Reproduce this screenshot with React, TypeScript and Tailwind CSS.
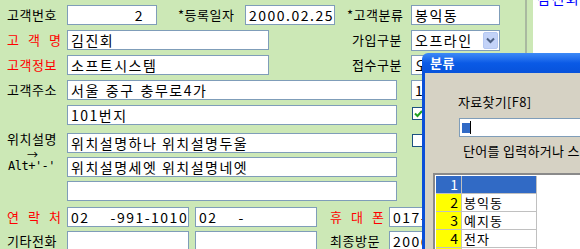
import React from 'react';
import clsx from 'clsx';

// Korean customer form with the "분류" lookup dialog on top

const Field: React.FC<{ className?: string; children?: React.ReactNode }> = ({ className, children }) => (
  <div
    className={clsx(
      'h-[20px] shrink-0 border border-[#7f9db9] bg-white flex items-center pl-[3px] text-[14px] tracking-[1.5px] whitespace-nowrap overflow-hidden',
      className
    )}
  >
    {children}
  </div>
);

const Label: React.FC<{ className?: string; children?: React.ReactNode }> = ({ className, children }) => (
  <div className={clsx('h-[20px] shrink-0 flex items-center text-[13px] tracking-[0.5px] whitespace-nowrap', className)}>
    {children}
  </div>
);

// labels like "고 객 명" are spread over the full label width
const Spread: React.FC<{ text: string; red?: boolean; className?: string }> = ({ text, red, className }) => (
  <div className={clsx('h-[20px] shrink-0 flex items-center', className)}>
    <div className={clsx('w-[54px] flex justify-between text-[13px]', red && 'text-[#ff0000]')}>
      {text.split('').map((c, i) => (
        <span key={i}>{c}</span>
      ))}
    </div>
  </div>
);

const Combo: React.FC<{ text: string }> = ({ text }) => (
  <div className="h-[21px] w-[89px] shrink-0 border border-[#7f9db9] bg-white flex items-center justify-between pl-[3px] pr-[1px] text-[14px] tracking-[1.5px]">
    <span>{text}</span>
    <div className="w-[15px] h-[17px] rounded-[2px] bg-[#c3d3f8] border border-[#b5c8f2] flex items-center justify-center">
      <svg width="9" height="7" viewBox="0 0 9 7">
        <path d="M1 1.5 L4.5 5 L8 1.5" fill="none" stroke="#4d6185" strokeWidth="2" />
      </svg>
    </div>
  </div>
);

const Check: React.FC<{ checked?: boolean }> = ({ checked }) => (
  <div className="w-[13px] h-[13px] shrink-0 border border-[#1c5180] bg-white flex items-center justify-center">
    {checked && (
      <svg width="9" height="9" viewBox="0 0 9 9">
        <path d="M1 4.5 L3.5 7 L8 2" fill="none" stroke="#21a121" strokeWidth="2" />
      </svg>
    )}
  </div>
);

const CategoryDialog: React.FC = () => {
  const rows = [
    { n: 1, name: '' },
    { n: 2, name: '봉익동' },
    { n: 3, name: '예지동' },
    { n: 4, name: '전자' },
    { n: 5, name: '종로' },
  ];
  return (
    <div className="absolute left-[422px] top-[53px] w-[200px] h-[230px] flex flex-col">
      <div className="h-[20px] shrink-0 rounded-tl-[6px] bg-linear-to-b from-[#3d8af7] via-[#0a5ae6] to-[#0752db] flex items-center pl-[8px] text-white font-bold text-[13px] tracking-[0.5px]">
        분류
      </div>
      <div className="flex-1 border-l-[3px] border-[#0a4fd8] bg-[#d6d2c4] flex flex-col">
        <div className="ml-[33px] mt-[21px] shrink-0 text-[13px] tracking-[0.3px] leading-[16px]">자료찾기[F8]</div>
        <div className="ml-[34px] mt-[8px] shrink-0 h-[19px] border border-[#7f9db9] bg-white flex items-center pl-[2px]">
          <span className="w-[8px] h-[10px] bg-[#316ac5]" />
          <span className="w-[1px] h-[13px] bg-black" />
        </div>
        <div className="ml-[38px] mt-[6px] shrink-0 text-[13px] leading-[16px] whitespace-nowrap tracking-[0.3px]">
          단어를 입력하거나 스크롤하세요
        </div>
        <div className="ml-[8px] mt-[14px] flex-1 border-t-2 border-l-2 border-[#8a8a8a] bg-white pt-[1px] pl-[1px]">
          {rows.map((r) => (
            <div key={r.n} className="flex h-[18px] text-[14px]">
              <div
                className={clsx(
                  'w-[26px] border-r border-b border-[#c0c0c0] flex items-center justify-end pr-[3px]',
                  r.n === 1 ? 'bg-[#316ac5] text-white' : 'bg-[#ffff00]'
                )}
              >
                {r.n}
              </div>
              <div
                className={clsx(
                  'w-[75px] border-r border-b border-[#c0c0c0] flex items-center pl-[2px] text-[13px] tracking-[1px]',
                  r.n === 1 ? 'bg-[#316ac5]' : 'bg-white'
                )}
              >
                {r.name}
              </div>
            </div>
          ))}
        </div>
      </div>
    </div>
  );
};

export default function App() {
  return (
    <div className="relative w-[580px] h-[249px] overflow-hidden bg-[#cce8b6] text-black font-['Noto_Sans_CJK_KR',sans-serif] flex">
      <div className="w-[525px] shrink-0 flex flex-col">
        {/* row 1 */}
        <div className="mt-[5px] flex">
          <Label className="w-[67px] pl-[7px]">고객번호</Label>
          <Field className="w-[90px] bg-[#ece9d8] justify-end pr-[12px]">2</Field>
          <Label className="ml-[21px] w-[67px]">*등록일자</Label>
          <Field className="w-[90px] tracking-[0.5px]">2000.02.25</Field>
          <Label className="ml-[12px] w-[64px]">*고객분류</Label>
          <Field className="w-[89px]">봉익동</Field>
        </div>
        {/* row 2 */}
        <div className="mt-[5px] flex">
          <Spread text="고객명" red className="w-[67px] pl-[7px]" />
          <Field className="w-[202px]">김진회</Field>
          <Label className="ml-[83px] w-[59px]">가입구분</Label>
          <Combo text="오프라인" />
        </div>
        {/* row 3 */}
        <div className="mt-[4px] flex">
          <Label className="w-[67px] pl-[7px] text-[#ff0000]">고객정보</Label>
          <Field className="w-[202px]">소프트시스템</Field>
          <Label className="ml-[83px] w-[59px]">접수구분</Label>
          <Field className="w-[89px] bg-[#ece9d8]">오프라인</Field>
        </div>
        {/* row 4 */}
        <div className="mt-[5px] flex">
          <Label className="w-[67px] pl-[7px]">고객주소</Label>
          <Field className="w-[330px]">
            서울 <span className="ml-[6px]">중구</span>
            <span className="ml-[6px]">충무로4가</span>
          </Field>
          <Field className="ml-[14px] w-[60px]">1</Field>
        </div>
        {/* row 5 */}
        <div className="mt-[5px] flex items-start">
          <Field className="ml-[67px] w-[330px]">101번지</Field>
          <div className="ml-[15px] mt-[2px]">
            <Check checked />
          </div>
        </div>
        {/* row 6 */}
        <div className="mt-[8px] flex items-start">
          <Label className="w-[67px] pl-[7px] -mt-[4px]">위치설명</Label>
          <Field className="w-[330px]">위치설명하나 위치설명두울</Field>
          <div className="ml-[15px] mt-[1px]">
            <Check />
          </div>
        </div>
        {/* row 7 */}
        <div className="mt-[4px] flex">
          <div className="w-[67px] h-[20px] shrink-0 relative">
            <span className="absolute left-[27px] -top-[9px] text-[11px] leading-[12px]">→</span>
            <span className="absolute left-[8px] top-[2px] text-[12px] leading-[14px] font-['DejaVu_Sans_Mono',monospace] tracking-[-0.5px]">
              Alt+'-'
            </span>
          </div>
          <Field className="w-[330px]">위치설명세엣 위치설명네엣</Field>
        </div>
        {/* row 8 */}
        <div className="mt-[4px] flex">
          <Field className="ml-[67px] w-[330px]" />
        </div>
        {/* row 9 */}
        <div className="mt-[6px] flex">
          <Spread text="연락처" red className="w-[67px] pl-[7px]" />
          <Field className="w-[122px] tracking-[0px]">
            02<span className="ml-[21px]">-991-1010</span>
          </Field>
          <Field className="ml-[6px] w-[122px] tracking-[0px]">
            02<span className="ml-[21px]">-</span>
          </Field>
          <Spread text="휴대폰" red className="ml-[13px] w-[59px]" />
          <Field className="w-[90px] tracking-[0px]">017-321-4567</Field>
        </div>
        {/* row 10 */}
        <div className="mt-[4px] flex">
          <Label className="w-[67px] pl-[7px]">기타전화</Label>
          <Field className="w-[122px]" />
          <Field className="ml-[6px] w-[122px]" />
          <Label className="ml-[13px] w-[59px]">최종방문</Label>
          <Field className="w-[90px] tracking-[0px]">2006.01.01</Field>
        </div>
      </div>

      {/* right side list panel */}
      <div className="w-[2px] shrink-0 bg-[#a9b9a0]" />
      <div className="w-[6px] shrink-0" />
      <div className="flex-1 bg-white overflow-hidden">
        <div className="-mt-[12px] pl-[4px] text-[14px] text-[#0000ff] tracking-[1.5px] whitespace-nowrap">김진회</div>
      </div>

      <CategoryDialog />
    </div>
  );
}
